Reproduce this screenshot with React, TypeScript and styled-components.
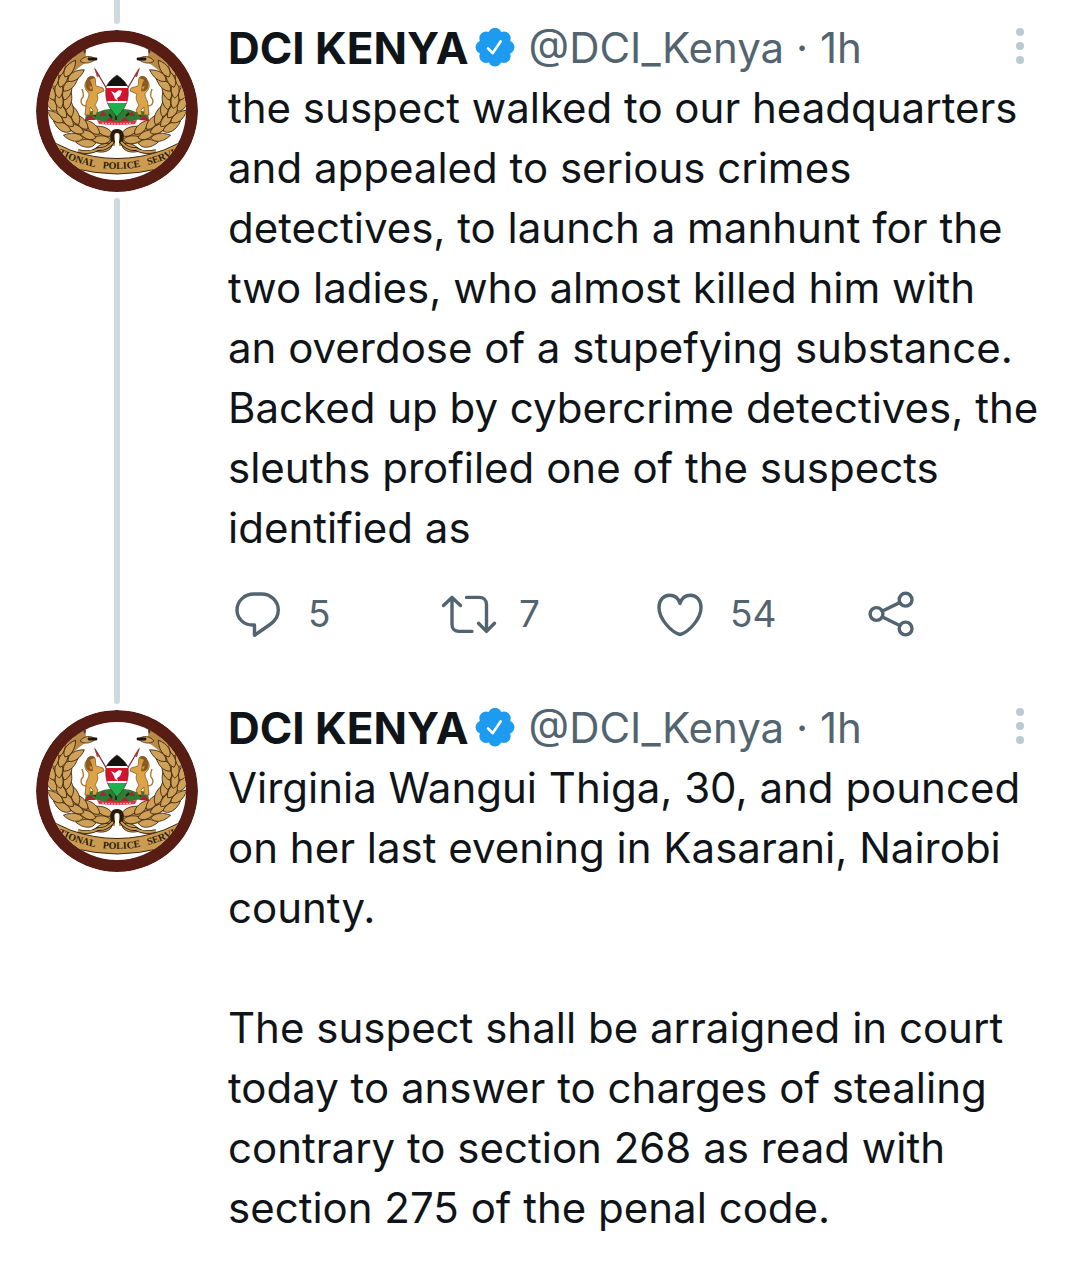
import React from "react";
import styled, { createGlobalStyle } from "styled-components";

const GlobalStyle = createGlobalStyle`
  *, *::before, *::after { box-sizing: border-box; }
  body {
    margin: 0;
    background: #ffffff;
    color: #0f1419;
    font-family: Inter, "Liberation Sans", Arial, sans-serif;
  }
`;

const Timeline = styled.main`
  display: flex;
  flex-direction: column;
`;

const TweetRow = styled.article`
  display: grid;
  grid-template-columns: 162px minmax(0, 1fr);
  column-gap: 30px;
  padding: 0 8px 0 36px;
`;

const Rail = styled.div`
  display: flex;
  flex-direction: column;
  align-items: center;
  gap: 6px;
`;

const Lead = styled.div`
  flex: none;
  width: 6px;
  height: 24px;
  background: #cfd9de;
  border-radius: 0 0 3px 3px;
`;

const Trail = styled.div`
  flex: 1;
  width: 6px;
  background: #cfd9de;
  border-radius: 3px 3px 0 0;
`;

const AvatarLink = styled.a`
  display: block;
  flex: none;
  width: 162px;
  height: 162px;
  border-radius: 50%;
  overflow: hidden;
`;

const Content = styled.div`
  padding-top: 18px;
  padding-bottom: 40px;
`;

const Header = styled.header`
  display: flex;
  align-items: center;
  height: 60px;
  font-size: 42px;
  line-height: 60px;
  white-space: nowrap;
`;

const Name = styled.a`
  color: #0f1419;
  font-size: 44px;
  font-weight: 700;
  text-decoration: none;
`;

const Badge = styled.svg`
  flex: none;
  width: 40px;
  height: 40px;
  margin: 0 14px 0 6px;
`;

const Meta = styled.span`
  color: #536471;
`;

const More = styled.button`
  display: flex;
  flex-direction: column;
  align-items: center;
  gap: 6px;
  width: 40px;
  margin-left: auto;
  margin-right: 32px;
  padding: 0 0 4px;
  border: 0;
  background: none;
`;

const Dot = styled.span`
  width: 8px;
  height: 8px;
  border-radius: 50%;
  background: #b9cad3;
`;

const Body = styled.p`
  margin: 0;
  font-size: 42px;
  line-height: 60px;
  white-space: pre-line;
`;

const Actions = styled.div`
  display: grid;
  grid-template-columns: repeat(4, 1fr);
  padding-top: 30px;
`;

const Action = styled.button`
  display: flex;
  align-items: center;
  gap: 20px;
  height: 52px;
  padding: 0;
  border: 0;
  background: none;
  color: #536471;
  font-family: inherit;
  font-size: 37px;
  line-height: 52px;
`;

const ActionIcon = styled.svg`
  flex: none;
  width: 60px;
  height: 52px;
  fill: none;
  stroke: currentColor;
  stroke-width: 3.4;
  stroke-linecap: round;
  stroke-linejoin: round;
`;

type Point = [number, number];
const WREATH: Point[] = [[79, 110], [20, 109], [2, 50], [54, 26]];

function along(t: number) {
  const u = 1 - t;
  const at = (k: 0 | 1) =>
    u * u * u * WREATH[0][k] + 3 * u * u * t * WREATH[1][k] + 3 * u * t * t * WREATH[2][k] + t * t * t * WREATH[3][k];
  const slope = (k: 0 | 1) =>
    u * u * (WREATH[1][k] - WREATH[0][k]) + 2 * u * t * (WREATH[2][k] - WREATH[1][k]) + t * t * (WREATH[3][k] - WREATH[2][k]);
  return { x: at(0), y: at(1), angle: (Math.atan2(slope(1), slope(0)) * 180) / Math.PI };
}

const LEAF = "M0 0C3-6 12-6 20 0C13 4 5 5 0 0Z";
const STEPS = Array.from({ length: 9 }, (_, i) => 0.05 + i * 0.094);

function Branch() {
  return (
    <g fill="#cfa057" stroke="#3a260f" strokeWidth="0.8" strokeLinejoin="round">
      <path d="M79 110C20 109 2 50 50 26" fill="none" stroke="#b98a45" strokeWidth="12" />
      {STEPS.map((t, i) => {
        const p = along(t);
        const lean = i % 2 ? 4 : -4;
        return (
          <g key={t} transform={`translate(${p.x} ${p.y}) rotate(${p.angle + lean})`}>
            <path d={LEAF} transform="translate(-6 -5) rotate(-20)" />
            <path d={LEAF} transform="translate(-6 5) rotate(22)" />
            <path d={LEAF} transform="translate(-4 0)" />
          </g>
        );
      })}
      <path d="M44 31C48 26 54 25 60 29C54 34 48 34 44 31Z" />
      <path d="M53 29H60" stroke="#1d150d" strokeWidth="2.8" strokeLinecap="round" />
    </g>
  );
}

function Lion() {
  return (
    <g>
      <path d="M51 76C44 76 44 70 47 67C48 65 47 62 46 59" fill="none" stroke="#b07a2f" strokeWidth="1.4" />
      <path
        d="M51 50C52 46 57 45 59 48C60 51 59 53 60 56L67 58L68 61L61 64C63 68 61 72 59 75L62 80L60 85L56 85L57 80L54 77L54 85L49 85L50 75C50 69 55 66 52 62C48 59 48 53 51 50Z"
        fill="#dda445"
        stroke="#7a4d1c"
        strokeWidth="0.7"
      />
      <path d="M51 49C53 45 58 46 59 48L54 50L56 54L57 61C50 63 48 55 51 49Z" fill="#8a5a25" />
      <path d="M55 49L59 50L58 54L55 53ZM53 56L56 57L55 60Z" fill="#d69b40" />
    </g>
  );
}

function Crest({ id }: { id: string }) {
  return (
    <svg viewBox="0 0 162 162" width="162" height="162" role="img" aria-label="National Police Service crest">
      <defs>
        <clipPath id={`${id}-disc`}>
          <circle cx="81" cy="81" r="69" />
        </clipPath>
        <path id={`${id}-arc`} d="M8 117Q81 161 154 117" />
      </defs>
      <circle cx="81" cy="81" r="81" fill="#571c14" />
      <circle cx="81" cy="81" r="69" fill="#ffffff" />
      <g clipPath={`url(#${id}-disc)`}>
        <path d="M0 10H51L49 28H30ZM162 10H111L113 28H132Z" fill="#571c14" />
        <Branch />
        <g transform="translate(162 0) scale(-1 1)">
          <Branch />
        </g>
        <path d="M42 121Q54 124 62 119Q70 120 77 112Q74 101 81 101Q88 101 85 112Q92 120 100 119Q108 124 120 121" fill="none" stroke="#2a1c0b" strokeWidth="3.8" />
        <path d="M42 121Q54 124 62 119Q70 120 77 112M85 112Q92 120 100 119Q108 124 120 121" fill="none" stroke="#c99a50" strokeWidth="2" />
        <path d="M6 106Q20 114 34 120Q81 137 128 120Q142 114 156 106V124Q128 143 81 144Q34 143 6 124Z" fill="#cb9b50" stroke="#3b2710" strokeWidth="1" />
        <text fontFamily="'Liberation Serif', serif" fontSize="10" fontWeight="700" fill="#2a1c0b" textAnchor="middle">
          <textPath href={`#${id}-arc`} startOffset="50%">
            {"TIONAL\u00a0\u00a0\u00a0POLICE\u00a0\u00a0\u00a0SERVI"}
          </textPath>
        </text>
      </g>
      <path d="M59 39L75 66M103 39L87 66" stroke="#8c3434" strokeWidth="1.3" />
      <path d="M58 37L64 46L61 47ZM104 37L98 46L101 47Z" fill="#a13a3a" />
      <path d="M50 84Q54 79 62 82Q72 77 81 80Q90 77 100 82Q108 79 112 84L113 90Q98 88 94 93H68Q64 88 49 90Z" fill="#2f7d35" />
      <path d="M48 90L54 85L60 90ZM63 86L67 81L71 86ZM92 86L96 81L99 86ZM103 90L108 85L114 91ZM70 91L74 87L78 91ZM85 91L89 87L93 91Z" fill="#b3202c" />
      <path d="M56 84L60 86M73 84L76 88M90 86L93 83M102 84L105 86M80 85V90" stroke="#152a18" strokeWidth="1.8" />
      <Lion />
      <g transform="translate(162 0) scale(-1 1)">
        <Lion />
      </g>
      <path d="M61 90Q81 94 101 90L99 94Q81 96 63 94Z" fill="#d33b49" />
      <path d="M66 93Q81 95 96 93" stroke="#f5c9cc" strokeWidth="1" fill="none" strokeDasharray="2 1" />
      <clipPath id={`${id}-shield`}>
        <path d="M81 45C85 48 89 51 92 57C93 70 91 76 81 87C71 76 69 70 70 57C73 51 77 48 81 45Z" />
      </clipPath>
      <g clipPath={`url(#${id}-shield)`}>
        <rect x="68" y="44" width="26" height="13" fill="#15130f" />
        <rect x="68" y="56" width="26" height="2" fill="#ffffff" />
        <rect x="68" y="58" width="26" height="13" fill="#d3142c" />
        <rect x="68" y="71" width="26" height="2" fill="#ffffff" />
        <rect x="68" y="73" width="26" height="15" fill="#1fb04c" />
      </g>
      <path d="M81 45C85 48 89 51 92 57C93 70 91 76 81 87C71 76 69 70 70 57C73 51 77 48 81 45Z" fill="none" stroke="#4b2f2b" strokeWidth="0.7" />
      <path d="M75 61L79 63L83 60L86 61L84 66L81 68L82 71L79 69L78 66Z" fill="#ffffff" />
    </svg>
  );
}

function VerifiedBadge() {
  return (
    <Badge viewBox="0 0 40 40" role="img" aria-label="Verified account">
      <g fill="#1d9bf0">
        <circle cx="20" cy="19" r="16" />
        {[0, 45, 90, 135, 180, 225, 270, 315].map((a) => (
          <circle key={a} cx="20" cy="6.6" r="6.8" transform={`rotate(${a} 20 19.2)`} />
        ))}
      </g>
      <path d="M13 20.4L17.6 25.2L25.6 13.4" fill="none" stroke="#ffffff" strokeWidth="2.6" strokeLinecap="round" strokeLinejoin="round" />
    </Badge>
  );
}

function TweetActions() {
  return (
    <Actions>
      <Action aria-label="5 replies">
        <ActionIcon viewBox="0 0 60 52">
          <path d="M26.3 6H33.5C43 6 50.3 13.2 50.3 22C50.3 28.5 47 33 42 36.5L26.5 47.3V37H24.8C15.5 37 9 30.3 9 22C9 13 16.5 6 26.3 6Z" />
        </ActionIcon>
        <span>5</span>
      </Action>
      <Action aria-label="7 retweets">
        <ActionIcon viewBox="0 0 60 52">
          <path d="M4.5 17.5L13 9.4L21.5 17.5M13 9.4V36.5C13 40.8 15.8 43.4 20 43.4H33M27.5 9.4H40C44.8 9.4 47.5 12.3 47.5 16.5V43.4M39.5 35.3L47.5 43.4L55.5 35.3" />
        </ActionIcon>
        <span>7</span>
      </Action>
      <Action aria-label="54 likes">
        <ActionIcon viewBox="0 0 60 52">
          <path d="M30 15.5C28.3 10.2 24.5 7.3 19.6 7.3C13.5 7.3 9 12.2 9 19.5C9 31.5 22 44.5 30 46.5C38 44.5 51 31.5 51 19.5C51 12.2 46.5 7.3 40.4 7.3C35.5 7.3 31.7 10.2 30 15.5Z" />
        </ActionIcon>
        <span>54</span>
      </Action>
      <Action aria-label="Share">
        <ActionIcon viewBox="0 0 60 52">
          <circle cx="15.5" cy="26" r="6.4" />
          <circle cx="44.6" cy="11.7" r="6.4" />
          <circle cx="44.6" cy="40.5" r="6.4" />
          <path d="M21.5 23L38.7 14.6M21.5 29L38.7 37.5" />
        </ActionIcon>
      </Action>
    </Actions>
  );
}

interface TweetProps {
  id: string;
  text: string;
  continues?: boolean;
}

function Tweet({ id, text, continues }: TweetProps) {
  return (
    <TweetRow>
      <Rail>
        <Lead />
        <AvatarLink href="#profile">
          <Crest id={id} />
        </AvatarLink>
        {continues && <Trail />}
      </Rail>
      <Content>
        <Header>
          <Name href="#profile">DCI KENYA</Name>
          <VerifiedBadge />
          <Meta>@DCI_Kenya · 1h</Meta>
          <More aria-label="More options">
            <Dot />
            <Dot />
            <Dot />
          </More>
        </Header>
        <Body>{text}</Body>
        {continues && <TweetActions />}
      </Content>
    </TweetRow>
  );
}

const FIRST = `the suspect walked to our headquarters
and appealed to serious crimes
detectives, to launch a manhunt for the
two ladies, who almost killed him with
an overdose of a stupefying substance.
Backed up by cybercrime detectives, the
sleuths profiled one of the suspects
identified as`;

const SECOND = `Virginia Wangui Thiga, 30, and pounced
on her last evening in Kasarani, Nairobi
county.

The suspect shall be arraigned in court
today to answer to charges of stealing
contrary to section 268 as read with
section 275 of the penal code.`;

export default function App() {
  return (
    <>
      <GlobalStyle />
      <Timeline>
        <Tweet id="first" text={FIRST} continues />
        <Tweet id="second" text={SECOND} />
      </Timeline>
    </>
  );
}
